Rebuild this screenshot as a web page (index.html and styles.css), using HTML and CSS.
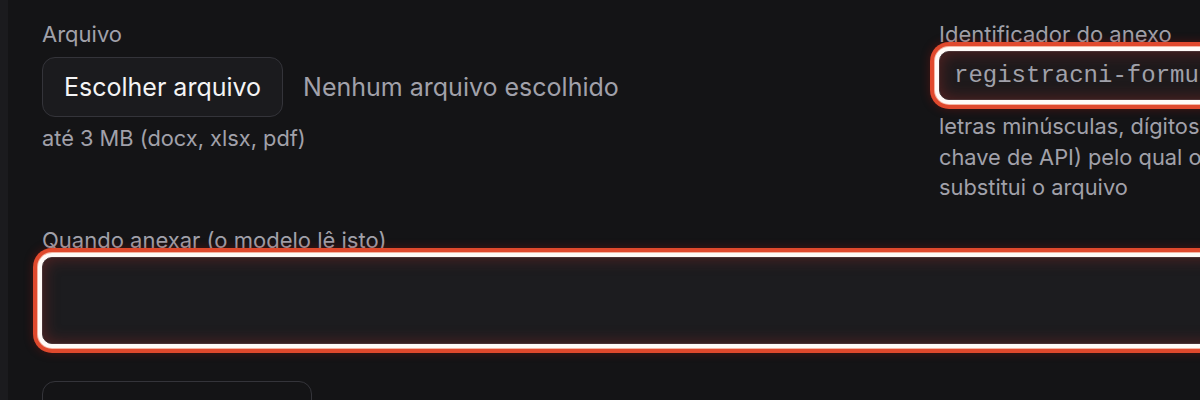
FILE: index.html
```html
<!DOCTYPE html>
<html lang="pt-BR">
<head>
<meta charset="utf-8">
<title>Anexo</title>
<link rel="stylesheet" href="styles.css">
</head>
<body>
<div class="app">
  <aside class="rail"></aside>
  <main class="form">
    <div class="row">
      <div class="field">
        <label class="label">Arquivo</label>
        <div class="file-input">
          <span class="file-btn">Escolher arquivo</span>
          <span class="file-name">Nenhum arquivo escolhido</span>
        </div>
        <p class="hint">até 3 MB (docx, xlsx, pdf)</p>
      </div>
      <div class="field ident">
        <label class="label">Identificador do anexo</label>
        <input class="text-input focus" type="text" value="registracni-formulario">
        <p class="hint hint-lines">letras minúsculas, dígitos e hífens; é o nome (na<br>chave de API) pelo qual o modelo referencia e<br>substitui o arquivo</p>
      </div>
    </div>
    <div class="field wide">
      <label class="label">Quando anexar (o modelo lê isto)</label>
      <textarea class="area focus"></textarea>
    </div>
    <div class="actions">
      <button class="ghost-btn" type="button">Adicionar anexo</button>
    </div>
  </main>
</div>
</body>
</html>
```

FILE: styles.css
```css
* { box-sizing: border-box; }
html, body { margin: 0; padding: 0; }
body {
  background: #141416;
  font-family: Inter, "Noto Sans", sans-serif;
  color: #a1a1aa;
  overflow: hidden;
  width: 1200px;
  height: 400px;
}
.app {
  display: flex;
  height: 400px;
}
.rail {
  width: 8px;
  flex: none;
  background: #1b1b1e;
}
.form {
  flex: none;
  width: 1500px;
  padding: 21px 0 0 34px;
  display: flex;
  flex-direction: column;
}
.row {
  display: grid;
  grid-template-columns: 897px 1fr;
}
.field {
  display: flex;
  flex-direction: column;
}
.label {
  font-size: 22px;
  line-height: 26px;
  color: #a1a1aa;
  white-space: nowrap;
}
.file-input {
  display: flex;
  align-items: center;
  gap: 20px;
  margin-top: 10px;
}
.file-btn {
  height: 60px;
  padding: 0 21px;
  display: flex;
  align-items: center;
  border: 1px solid #34343a;
  border-radius: 13px;
  background: #1b1b1e;
  color: #f4f4f5;
  font-size: 25px;
  white-space: nowrap;
}
.file-name {
  font-size: 25px;
  color: #a1a1aa;
  white-space: nowrap;
}
.hint {
  margin: 8px 0 0;
  font-size: 21.8px;
  line-height: 26px;
  color: #a1a1aa;
  white-space: nowrap;
}
.focus {
  outline: none;
  box-shadow:
    0 0 0 4px #fffaf7,
    0 0 0 5px #f6b5a4,
    0 0 0 9px #e0492d,
    0 0 10px 9px rgba(150, 20, 15, 0.4),
    inset 0 0 16px rgba(160, 45, 40, 0.45);
}
.text-input {
  margin-top: 4px;
  height: 49px;
  width: 480px;
  border: 1px solid #4a3234;
  border-radius: 10px;
  background: #1e1a1c;
  color: #a1a1aa;
  font-family: "Liberation Mono", "DejaVu Sans Mono", monospace;
  font-size: 24px;
  padding: 0 14px;
}
.hint-lines {
  margin-top: 11px;
  line-height: 30.5px;
}
.wide { margin-top: 24px; }
.area {
  margin-top: 4px;
  height: 87px;
  width: 1300px;
  border: 1px solid #4a3234;
  border-radius: 10px;
  background: #1c1c1f;
  resize: none;
}
.actions { margin-top: 37px; }
.ghost-btn {
  width: 270px;
  height: 60px;
  border: 1px solid #34343a;
  border-radius: 13px;
  background: transparent;
  color: #f4f4f5;
  font-family: inherit;
  font-size: 25px;
}
```
